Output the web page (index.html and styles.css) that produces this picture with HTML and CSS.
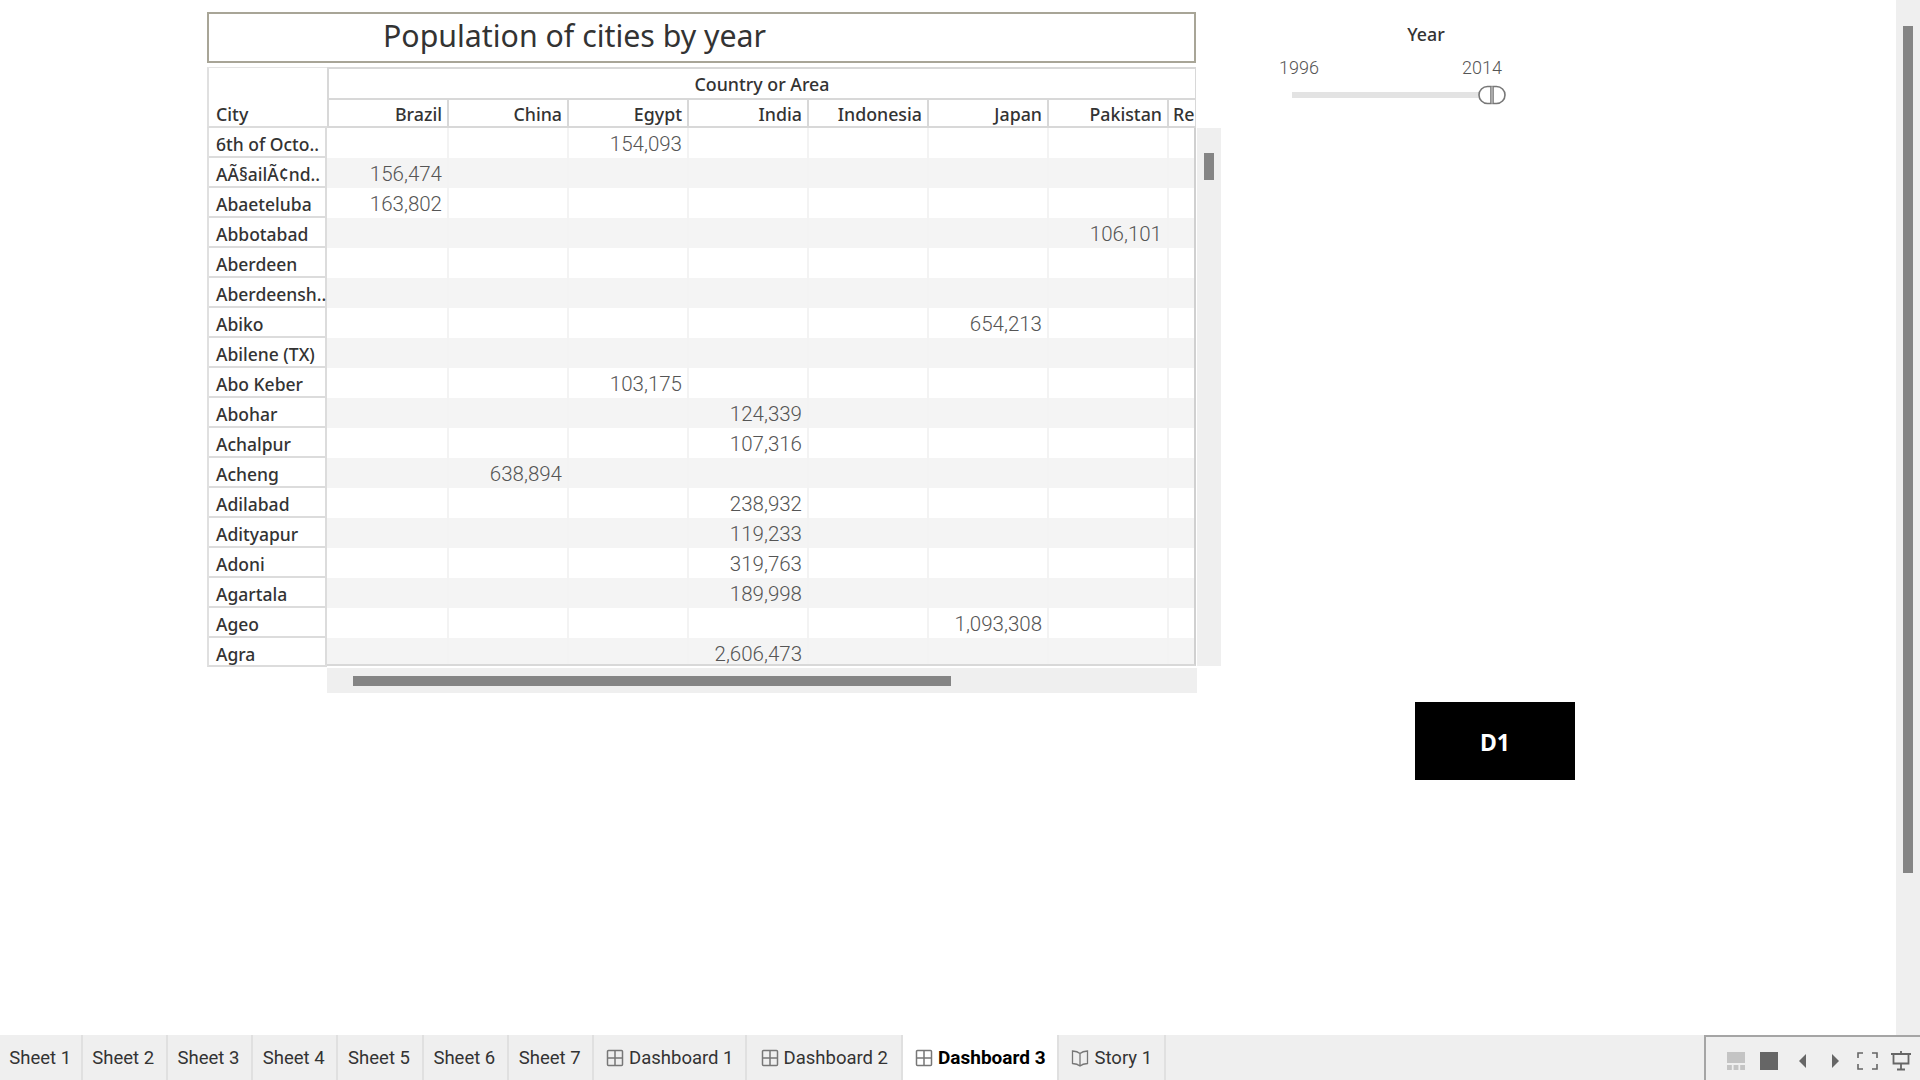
FILE: index.html
```html
<!DOCTYPE html>
<html lang="en">

<head>
    <meta charset="UTF-8">
    <title>Dashboard 3</title>
    <link rel="stylesheet" href="styles.css">
</head>

<body>
    <main class="dashboard">
        <section class="left">
            <h1 class="title">Population of cities by year</h1>
            <div class="crosstab">
                <div class="head">
                    <div class="city-head">City</div>
                    <div class="head-cols">
                        <div class="group-head">Country or Area</div>
                        <div class="row">
                            <span>Brazil</span><span>China</span><span>Egypt</span><span>India</span><span>Indonesia</span><span>Japan</span><span>Pakistan</span><span class="clip">Re</span>
                        </div>
                    </div>
                </div>
                <div class="body-wrap">
                    <div class="cities">
                        <div>6th of Octo..</div>
                        <div>AÃ§ailÃ¢nd..</div>
                        <div>Abaeteluba</div>
                        <div>Abbotabad</div>
                        <div>Aberdeen</div>
                        <div>Aberdeensh..</div>
                        <div>Abiko</div>
                        <div>Abilene (TX)</div>
                        <div>Abo Keber</div>
                        <div>Abohar</div>
                        <div>Achalpur</div>
                        <div>Acheng</div>
                        <div>Adilabad</div>
                        <div>Adityapur</div>
                        <div>Adoni</div>
                        <div>Agartala</div>
                        <div>Ageo</div>
                        <div>Agra</div>
                    </div>
                    <div class="values">
                        <div class="row"><span></span><span></span><span>154,093</span><span></span><span></span><span></span><span></span><span></span></div>
                        <div class="row"><span>156,474</span><span></span><span></span><span></span><span></span><span></span><span></span><span></span></div>
                        <div class="row"><span>163,802</span><span></span><span></span><span></span><span></span><span></span><span></span><span></span></div>
                        <div class="row"><span></span><span></span><span></span><span></span><span></span><span></span><span>106,101</span><span></span></div>
                        <div class="row"><span></span><span></span><span></span><span></span><span></span><span></span><span></span><span></span></div>
                        <div class="row"><span></span><span></span><span></span><span></span><span></span><span></span><span></span><span></span></div>
                        <div class="row"><span></span><span></span><span></span><span></span><span></span><span>654,213</span><span></span><span></span></div>
                        <div class="row"><span></span><span></span><span></span><span></span><span></span><span></span><span></span><span></span></div>
                        <div class="row"><span></span><span></span><span>103,175</span><span></span><span></span><span></span><span></span><span></span></div>
                        <div class="row"><span></span><span></span><span></span><span>124,339</span><span></span><span></span><span></span><span></span></div>
                        <div class="row"><span></span><span></span><span></span><span>107,316</span><span></span><span></span><span></span><span></span></div>
                        <div class="row"><span></span><span>638,894</span><span></span><span></span><span></span><span></span><span></span><span></span></div>
                        <div class="row"><span></span><span></span><span></span><span>238,932</span><span></span><span></span><span></span><span></span></div>
                        <div class="row"><span></span><span></span><span></span><span>119,233</span><span></span><span></span><span></span><span></span></div>
                        <div class="row"><span></span><span></span><span></span><span>319,763</span><span></span><span></span><span></span><span></span></div>
                        <div class="row"><span></span><span></span><span></span><span>189,998</span><span></span><span></span><span></span><span></span></div>
                        <div class="row"><span></span><span></span><span></span><span></span><span></span><span>1,093,308</span><span></span><span></span></div>
                        <div class="row"><span></span><span></span><span></span><span>2,606,473</span><span></span><span></span><span></span><span></span></div>
                    </div>
                    <div class="v-scroll"><div class="v-thumb"></div></div>
                </div>
                <div class="h-scroll"><div class="h-thumb"></div></div>
            </div>
        </section>

        <section class="right">
            <div class="filter">
                <div class="filter-title">Year</div>
                <div class="filter-range"><span>1996</span><span>2014</span></div>
                <div class="slider">
                    <div class="track"></div>
                    <svg class="handles" width="28" height="20" viewBox="0 0 28 20">
                        <path d="M13 1.500H9.500A8.500 8.500 0 0 0 9.500 18.500H13Z" fill="#fff" stroke="#777" stroke-width="1.600"/>
                        <path d="M15 1.500H18.500A8.500 8.500 0 0 1 18.500 18.500H15Z" fill="#fff" stroke="#777" stroke-width="1.600"/>
                        <rect x="13" y="2" width="2" height="16" fill="#aaa"/>
                    </svg>
                </div>
            </div>
            <div class="d1">D1</div>
        </section>

        <aside class="page-scroll"><div class="page-thumb"></div></aside>
    </main>

    <footer class="tabbar">
        <div class="tabs">
            <div class="tab sheet first">Sheet 1</div>
            <div class="tab sheet">Sheet 2</div>
            <div class="tab sheet">Sheet 3</div>
            <div class="tab sheet">Sheet 4</div>
            <div class="tab sheet">Sheet 5</div>
            <div class="tab sheet">Sheet 6</div>
            <div class="tab sheet">Sheet 7</div>
            <div class="tab dash first-dash">
                <svg width="18" height="18" viewBox="0 0 18 18"><path d="M1.500 2.500A1 1 0 0 1 2.500 1.500H15.500A1 1 0 0 1 16.500 2.500V15.500A1 1 0 0 1 15.500 16.500H2.500A1 1 0 0 1 1.500 15.500ZM9 1.500V16.500M1.500 9H16.500" fill="none" stroke="#777" stroke-width="1.500"/></svg>
                Dashboard 1
            </div>
            <div class="tab dash">
                <svg width="18" height="18" viewBox="0 0 18 18"><path d="M1.500 2.500A1 1 0 0 1 2.500 1.500H15.500A1 1 0 0 1 16.500 2.500V15.500A1 1 0 0 1 15.500 16.500H2.500A1 1 0 0 1 1.500 15.500ZM9 1.500V16.500M1.500 9H16.500" fill="none" stroke="#777" stroke-width="1.500"/></svg>
                Dashboard 2
            </div>
            <div class="tab dash active">
                <svg width="18" height="18" viewBox="0 0 18 18"><path d="M1.500 2.500A1 1 0 0 1 2.500 1.500H15.500A1 1 0 0 1 16.500 2.500V15.500A1 1 0 0 1 15.500 16.500H2.500A1 1 0 0 1 1.500 15.500ZM9 1.500V16.500M1.500 9H16.500" fill="none" stroke="#777" stroke-width="1.500"/></svg>
                <b>Dashboard 3</b>
            </div>
            <div class="tab story">
                <svg width="18" height="18" viewBox="0 0 18 18"><path d="M9 4.500C7 2.800 4.500 2.200 1.500 2V14.500C4.500 14.700 7 15.300 9 17C11 15.300 13.500 14.700 16.500 14.500V2C13.500 2.200 11 2.800 9 4.500ZM9 4.500V17" fill="none" stroke="#777" stroke-width="1.300"/></svg>
                Story 1
            </div>
        </div>
        <div class="controls">
            <svg width="18" height="18" viewBox="0 0 18 18" fill="#c4c4c4"><rect width="18" height="11"/><rect y="13" width="4.800" height="5"/><rect x="6.600" y="13" width="4.800" height="5"/><rect x="13.200" y="13" width="4.800" height="5"/></svg>
            <svg class="gap-15" width="18" height="18" viewBox="0 0 18 18"><rect width="18" height="18" fill="#666"/></svg>
            <svg class="gap-21" width="7" height="14" viewBox="0 0 7 14"><path d="M7 0V14L0 7Z" fill="#666"/></svg>
            <svg class="gap-26" width="7" height="14" viewBox="0 0 7 14"><path d="M0 0V14L7 7Z" fill="#666"/></svg>
            <svg class="gap-18" width="21" height="18" viewBox="0 0 21 18"><path d="M1 6V1H6M15 1H20V6M20 12V17H15M6 17H1V12" fill="none" stroke="#666" stroke-width="1.600"/></svg>
            <svg class="gap-13" width="20" height="20" viewBox="0 0 20 20"><path d="M0 3H20M2.500 3V12.500H17.500V3M10 12.500V18M6 18.500H14M10 0V3" fill="none" stroke="#666" stroke-width="1.800"/></svg>
        </div>
    </footer>
</body>

</html>
```

FILE: styles.css
```css
* {
    box-sizing: border-box;
}

body {
    margin: 0;
    height: 100vh;
    display: flex;
    flex-direction: column;
    overflow: hidden;
    background: #fff;
    font-family: "Noto Sans", "Liberation Sans", sans-serif;
    color: #333;
}

.dashboard {
    flex: 1;
    display: flex;
    min-height: 0;
}

.left {
    width: 1014px;
    margin-left: 207px;
    padding-top: 12px;
}

.title {
    width: 989px;
    height: 51px;
    margin: 0;
    padding-left: 174px;
    border: 2px solid #a8a597;
    font-size: 30.3px;
    font-weight: 400;
    line-height: 43px;
}

.crosstab {
    margin-top: 4px;
    width: 1014px;
    font-size: 17.8px;
}

/* header */
.head {
    display: flex;
    width: 989px;
    height: 61px;
}

.city-head {
    width: 120px;
    padding: 33px 0 0 7px;
    font-weight: 500;
    line-height: 26px;
    border-bottom: 2px solid #dcdcdc;
    border-left: 2px solid #e0e0e0;
    border-top: 1px solid #e4e4e4;
}

.head-cols {
    flex: 1;
    border: solid #d8d8d8;
    border-width: 2px 1px 0 2px;
    overflow: hidden;
}

.group-head {
    height: 31px;
    line-height: 31px;
    text-align: center;
    font-weight: 500;
    border-bottom: 2px solid #d8d8d8;
}

.head .row {
    height: 28px;
    line-height: 28px;
    font-weight: 500;
    border-bottom: 2px solid #d8d8d8;
}

.row {
    display: flex;
    width: 867px;
}

.row span {
    width: 120px;
    padding-right: 5px;
    text-align: right;
    border-right: 2px solid #d8d8d8;
}

.head .row .clip {
    width: 27px;
    padding: 0 0 0 4px;
    text-align: left;
    border: 0;
    overflow: hidden;
}

/* body */
.body-wrap {
    display: flex;
    height: 538px;
}

.cities {
    width: 120px;
    height: 539px;
    font-size: 17.5px;
    font-weight: 500;
    border-left: 2px solid #e0e0e0;
    border-right: 2px solid #dcdcdc;
    border-bottom: 2px solid #dcdcdc;
}

.cities div {
    height: 30px;
    padding: 2px 0 0 7px;
    line-height: 28px;
    white-space: nowrap;
    border-bottom: 2px solid #dcdcdc;
}

.cities div:last-child {
    height: 27px;
    border-bottom: 0;
}

.values {
    width: 869px;
    height: 538px;
    overflow: hidden;
    border-right: 2px solid #d0d0d0;
    border-bottom: 2px solid #d8d8d8;
    color: #555;
    font-family: Roboto, sans-serif;
    font-size: 20.5px;
    font-weight: 300;
}

.values .row {
    height: 30px;
    line-height: 32px;
    background: #fff;
}

.values .row:nth-child(even) {
    background: #f4f4f4;
}

.values .row span {
    border-right-color: #f3f3f3;
}

.values .row span:first-child {
    width: 122px;
}

.values .row span:last-child {
    width: 25px;
    border-right: 0;
}

.v-scroll {
    width: 24px;
    margin-left: 1px;
    padding: 25px 7px 0;
    background: #efefef;
}

.v-thumb {
    width: 10px;
    height: 27px;
    background: #858585;
}

.h-scroll {
    width: 870px;
    height: 25px;
    margin: 2px 0 0 120px;
    padding: 8px 0 0 26px;
    background: #efefef;
}

.h-thumb {
    width: 598px;
    height: 10px;
    background: #858585;
}

/* right side */
.right {
    width: 675px;
}

.filter {
    width: 290px;
    margin-left: 52px;
    padding-top: 24px;
    font-size: 17.8px;
}

.filter-title {
    width: 306px;
    line-height: 20px;
    text-align: center;
    font-weight: 500;
}

.filter-range {
    display: flex;
    justify-content: space-between;
    width: 223px;
    margin: 14px 0 0 6px;
    line-height: 20px;
    color: #555;
    font-family: Roboto, sans-serif;
    font-size: 18px;
    font-weight: 300;
}

.slider {
    display: flex;
    align-items: center;
    height: 22px;
    margin: 6px 0 0 19px;
}

.track {
    width: 189px;
    height: 6px;
    background: #e3e3e3;
}

.handles {
    margin-left: -3px;
}

.d1 {
    width: 160px;
    height: 78px;
    margin: 596px 0 0 194px;
    background: #000;
    color: #fff;
    font-size: 23px;
    font-weight: 700;
    line-height: 80px;
    text-align: center;
}

.page-scroll {
    width: 24px;
    padding: 26px 7px 0;
    background: #efefef;
}

.page-thumb {
    width: 10px;
    height: 847px;
    background: #858585;
}

/* bottom tabs */
.tabbar {
    display: flex;
    justify-content: space-between;
    height: 45px;
    background: #efefef;
}

.tabs {
    display: flex;
    height: 45px;
    font-family: Roboto, sans-serif;
    font-size: 18.5px;
    color: #333;
}

.tab {
    display: flex;
    align-items: center;
    justify-content: center;
    gap: 5px;
    height: 45px;
    border-right: 2px solid #e0e0e0;
}

.sheet {
    width: 85.3px;
    padding-right: 2px;
}

.sheet.first {
    width: 82.5px;
    padding-right: 0;
}

.dash {
    width: 156px;
}

.first-dash {
    width: 153px;
}

.active {
    background: #fff;
    color: #000;
}

.active b {
    font-size: 19px;
}

.story {
    width: 107px;
}

.controls {
    display: flex;
    align-items: center;
    width: 216px;
    padding: 4px 0 0 21px;
    border: solid #a5a5a5;
    border-width: 2px 0 0 2px;
}

.gap-13 {
    margin-left: 13px;
}

.gap-15 {
    margin-left: 15px;
}

.gap-18 {
    margin-left: 18px;
}

.gap-21 {
    margin-left: 21px;
}

.gap-26 {
    margin-left: 26px;
}
```
